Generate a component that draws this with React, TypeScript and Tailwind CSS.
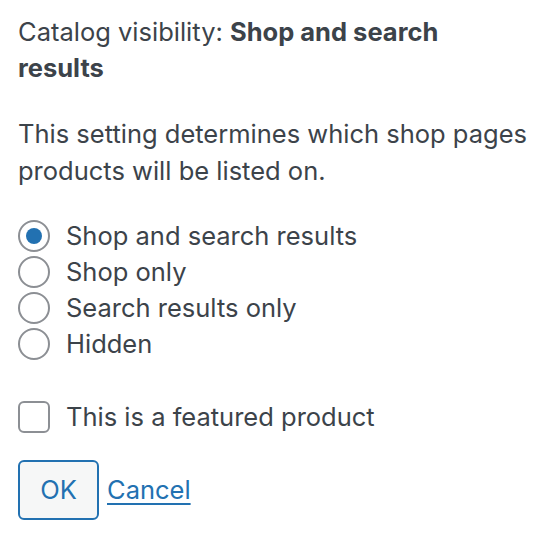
import { useState } from "react";

const options = [
	{ value: "visible", label: "Shop and search results" },
	{ value: "catalog", label: "Shop only" },
	{ value: "search", label: "Search results only" },
	{ value: "hidden", label: "Hidden" },
];

function App() {
	const [visibility, setVisibility] = useState("visible");
	const [featured, setFeatured] = useState(false);

	return (
		<main className="w-[550px] h-[548px] bg-white pl-[18px] pt-[14px] text-[25.5px] leading-[36px] text-[#3c434a] font-['Inter',sans-serif]">
			<div className="w-[512px]">
				<p>
					Catalog visibility: <strong className="font-bold">Shop and search results</strong>
				</p>
				<p className="mt-[29px] leading-[37px]">This setting determines which shop pages products will be listed on.</p>

				<div className="mt-[29px] flex flex-col">
					{options.map((opt) => (
						<label key={opt.value} className="flex items-center h-[36px] gap-4">
							<input
								type="radio"
								name="visibility"
								checked={visibility === opt.value}
								onChange={() => setVisibility(opt.value)}
								className="appearance-none w-8 h-8 rounded-full border-2 border-[#8c8f94] bg-white grid place-items-center before:content-[''] before:w-4 before:h-4 before:rounded-full before:bg-[#2271b1] before:scale-0 checked:before:scale-100"
							/>
							<span>{opt.label}</span>
						</label>
					))}
				</div>

				<label className="mt-[37px] flex items-center h-[36px] gap-4">
					<input
						type="checkbox"
						checked={featured}
						onChange={(e) => setFeatured(e.target.checked)}
						className="appearance-none w-8 h-8 rounded-md border-2 border-[#8c8f94] bg-white"
					/>
					<span>This is a featured product</span>
				</label>

				<div className="mt-[25px] flex items-center gap-2">
					<button className="w-[81px] h-[60px] rounded-md border-2 border-[#2271b1] bg-[#f6f7f7] text-[#2271b1]">OK</button>
					<a href="#" className="text-[#2271b1] underline underline-offset-4">Cancel</a>
				</div>
			</div>
		</main>
	);
}

export default App;
